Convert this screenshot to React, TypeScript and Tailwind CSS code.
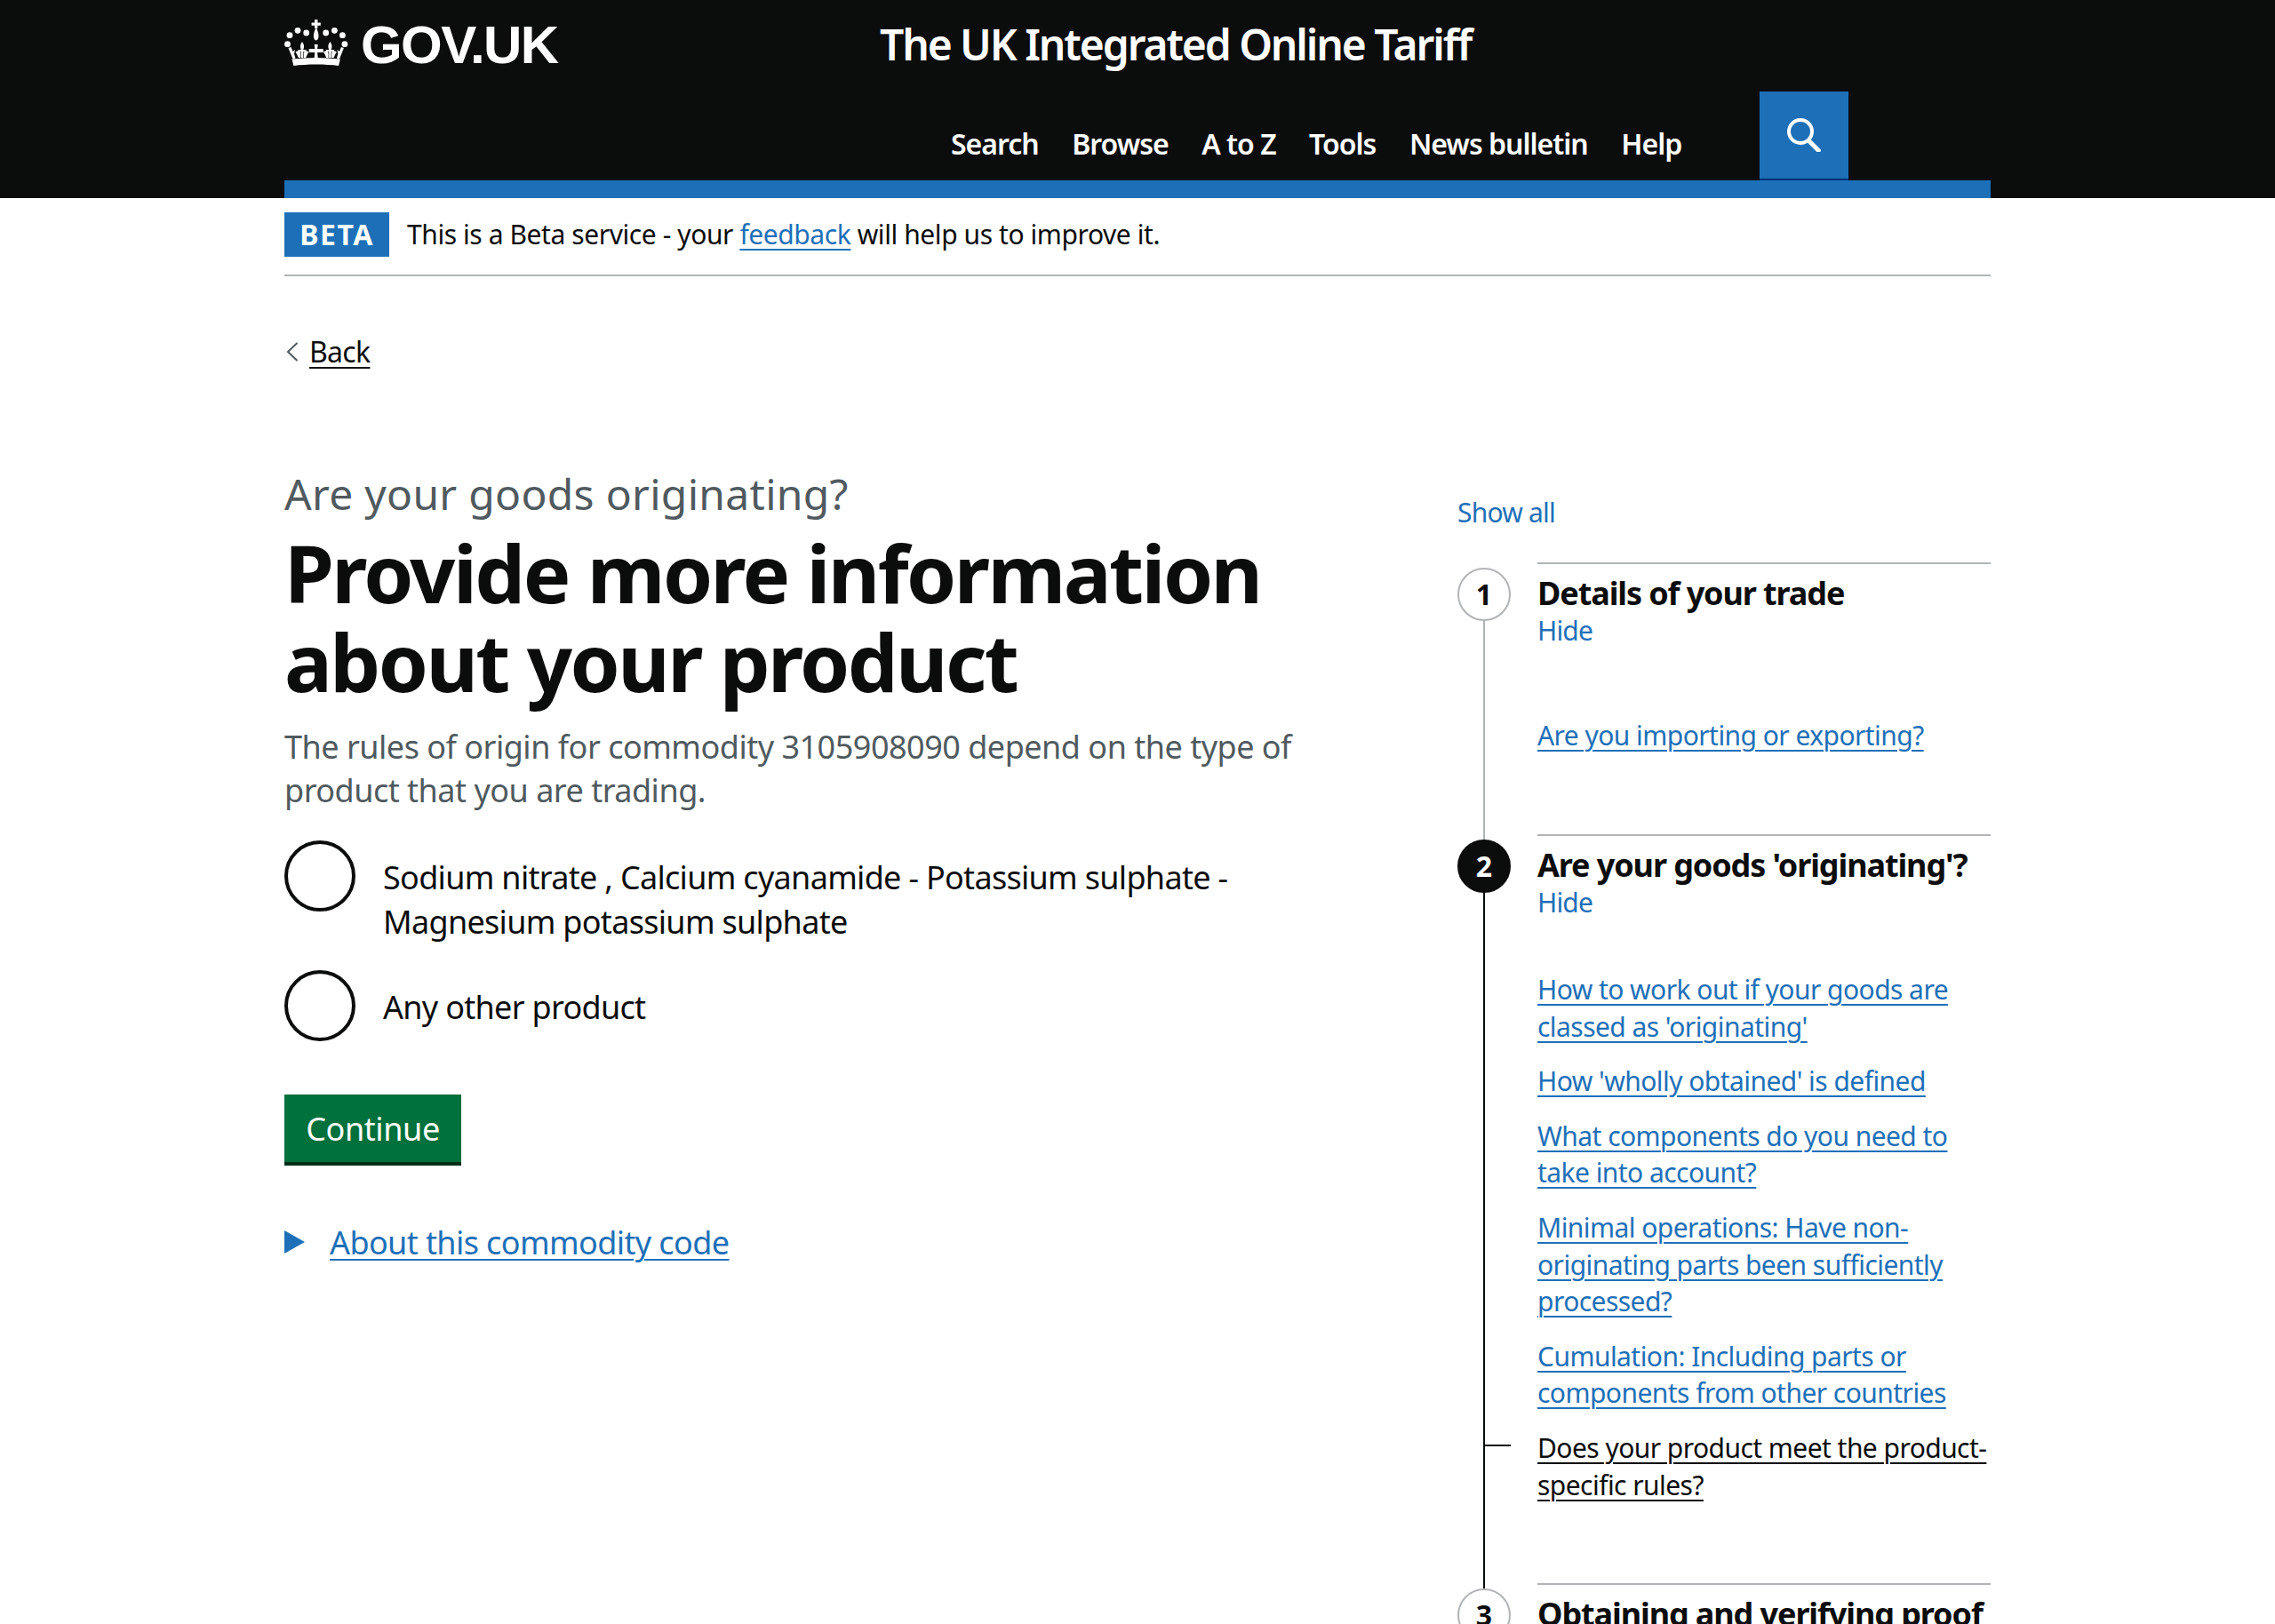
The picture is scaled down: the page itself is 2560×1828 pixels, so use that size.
import { Fragment } from "react";

const navItems = ["Search", "Browse", "A to Z", "Tools", "News bulletin", "Help"];

const originLinks = [
  ["How to work out if your goods are", "classed as 'originating'"],
  ["How 'wholly obtained' is defined"],
  ["What components do you need to", "take into account?"],
  ["Minimal operations: Have non-", "originating parts been sufficiently", "processed?"],
  ["Cumulation: Including parts or", "components from other countries"],
];

function Fleur({ x }: { x: number }) {
  return (
    <g transform={`translate(${x} 34)`}>
      <path d="M0-9C2.500-6 2.500-3 1.200 0V9H-1.200V0C-2.500-3-2.500-6 0-9z" />
      <path d="M-4.500 0h9v2.200h-9z" />
      <path d="M1.800 3.500C3 1 6 1 7.500 2.800 6 4 5.500 6.500 4.200 9H1.800z" />
      <path d="M-1.800 3.500C-3 1-6 1-7.500 2.800-6 4-5.500 6.500-4.200 9H-1.800z" />
    </g>
  );
}

function Crown() {
  return (
    <svg viewBox="0 0 72 52" className="w-[72px] h-[52px] fill-white" aria-hidden="true">
      <path d="M34 0h3.400v3.400h3.400v3.400h-3.400v3h-3.400v-3h-3.400V3.400H34z" />
      <path d="M35.700 9c2 3.500 2.800 7 2.800 9.500 0 2.800-1.200 5-2.800 5s-2.800-2.200-2.800-5c0-2.500.8-6 2.800-9.500z" />
      {[[3.500, 27.700], [6, 17.700], [15, 12.300], [24.700, 15], [46.700, 15], [56.400, 12.300], [65.400, 17.700], [67.900, 27.700]].map(([cx, cy]) => (
        <circle key={cx} cx={cx} cy={cy} r="3.400" />
      ))}
      <path d="M4.500 32l3-1 2 5 2.500-2-1 4.500 1.500 5-3 1z" />
      <path d="M66.900 32l-3-1-2 5-2.500-2 1 4.500-1.500 5 3 1z" />
      <Fleur x={20} />
      <Fleur x={51.400} />
      <path d="M33.700 28h4l-.6 5h6.600v4h-6.600l.6 6h-4l.6-6h-6.600v-4h6.600z" />
      <path d="M8.500 44.500c18-2 36-2 54.400 0l-1.900 7.500c-15-2-35-2-50.600 0z" />
    </svg>
  );
}

function Step({ num, title, current, children, className }: { num: number; title: string; current?: boolean; children?: React.ReactNode; className: string }) {
  return (
    <div className={`relative pl-[90px] ${className}`}>
      {/* rail and number sit over the step */}
      <div className={`absolute left-[29px] top-[6px] bottom-[-6px] w-[2px] ${current ? "bg-[#0b0c0c]" : "bg-[#b1b4b6]"}`} />
      <div className={`absolute left-0 top-[6px] w-[60px] h-[60px] rounded-full border-2 flex items-center justify-center text-[32px] font-bold ${current ? "bg-[#0b0c0c] border-[#0b0c0c] text-white" : "bg-white border-[#b1b4b6] text-[#0b0c0c]"}`}>
        {num}
      </div>
      <div className="border-t-2 border-[#b1b4b6] pt-[10px]">
        <h2 className="text-[36px] leading-[46px] font-bold tracking-[-1.1px] text-[#0b0c0c] whitespace-nowrap">{title}</h2>
        <div className="text-[30px] leading-[38px] tracking-[-0.8px] text-[#1d70b8]">Hide</div>
        {children}
      </div>
    </div>
  );
}

function StepLink({ lines, active }: { lines: string[]; active?: boolean }) {
  return (
    <div className="relative text-[30px] leading-[41.6px] tracking-[-0.55px] whitespace-nowrap">
      {active && <div className="absolute left-[-60px] top-[17px] w-[30px] h-[2px] bg-[#0b0c0c]" />}
      <a className={`underline underline-offset-[5px] decoration-2 ${active ? "text-[#0b0c0c]" : "text-[#1d70b8]"}`}>
        {lines.map((line, i) => (
          <Fragment key={line}>
            {i > 0 && <br />}
            {line}
          </Fragment>
        ))}
      </a>
    </div>
  );
}

export default function App() {
  return (
    <div className="h-[1828px] overflow-hidden bg-white font-['Noto_Sans',sans-serif] text-[#0b0c0c]">
      <header className="bg-[#0b0c0c] h-[223px]">
        <div className="w-[1920px] mx-auto h-full flex flex-col">
          <div className="h-[103px] flex items-start">
            <div className="w-[670px] flex items-start gap-[14px] pt-[22px]">
              <Crown />
              <span className="pt-[3px] font-['Liberation_Sans',sans-serif] font-bold text-[60px] leading-[52px] tracking-[-1.6px] text-white">GOV.UK</span>
            </div>
            <span className="pt-[24px] text-[48px] leading-[52px] font-semibold tracking-[-2.1px] text-white whitespace-nowrap">The UK Integrated Online Tariff</span>
          </div>
          <div className="h-[100px] flex">
            <nav className="ml-[750px] w-[910px] flex gap-[37.5px] pt-[37px]">
              {navItems.map((item) => (
                <a key={item} className="text-[32px] leading-[44px] font-semibold tracking-[-1px] text-white whitespace-nowrap">{item}</a>
              ))}
            </nav>
            <button className="w-[100px] h-[100px] bg-[#1d70b8] border-b-2 border-[#003078] flex items-center justify-center">
              <svg viewBox="0 0 38 38" className="w-[38px] h-[38px] fill-none stroke-white" aria-hidden="true">
                <circle cx="15" cy="15" r="13" strokeWidth="4" />
                <path d="M23 24L37 38" strokeWidth="5" />
              </svg>
            </button>
          </div>
          <div className="h-[20px] bg-[#1d70b8]" />
        </div>
      </header>

      <div className="w-[1920px] mx-auto">
        <div className="h-[88px] pt-[16px] border-b-2 border-[#b1b4b6] flex items-start gap-[20px]">
          <strong className="w-[118px] h-[50px] bg-[#1d70b8] text-white text-[32px] leading-[50px] font-bold text-center tracking-[1.5px]">BETA</strong>
          <p className="text-[30px] leading-[50px] tracking-[-0.42px] whitespace-nowrap">
            This is a Beta service - your <a className="text-[#1d70b8] underline underline-offset-[5px] decoration-2">feedback</a> will help us to improve it.
          </p>
        </div>

        <a className="mt-[64px] flex items-center h-[42px] text-[32px] tracking-[-0.7px]">
          <svg viewBox="0 0 14 22" className="w-[14px] h-[22px] ml-[2px] mr-[12px] fill-none stroke-[#505a5f]" aria-hidden="true">
            <path d="M12.500 1L2 11l10.500 10" strokeWidth="2" />
          </svg>
          <span className="underline underline-offset-[5px] decoration-2">Back</span>
        </a>

        <div className="flex mt-[110px]">
          <main className="w-[1320px]">
            <p className="pt-[1px] text-[48px] leading-[56px] tracking-[0.3px] text-[#505a5f]">Are your goods originating?</p>
            <h1 className="mt-[10px] text-[90px] leading-[100px] font-bold tracking-[-2.55px]">
              Provide more information<br />about your product
            </h1>
            <p className="mt-[22px] text-[36px] leading-[49px] tracking-[-0.5px] text-[#505a5f]">
              The rules of origin for commodity 3105908090 depend on the type of<br />product that you are trading.
            </p>

            <div className="mt-[32px] flex gap-[31px]">
              <span className="w-[80px] h-[80px] shrink-0 rounded-full border-4 border-[#0b0c0c]" />
              <label className="pt-[17px] text-[36px] leading-[50px] tracking-[-0.7px]">
                Sodium nitrate , Calcium cyanamide - Potassium sulphate -<br />Magnesium potassium sulphate
              </label>
            </div>
            <div className="mt-[29px] flex gap-[31px]">
              <span className="w-[80px] h-[80px] shrink-0 rounded-full border-4 border-[#0b0c0c]" />
              <label className="pt-[17px] text-[36px] leading-[50px] tracking-[-0.7px]">Any other product</label>
            </div>

            <button className="mt-[60px] block w-[199px] h-[80px] pt-[2px] bg-[#00703c] border-b-4 border-[#002d18] text-white text-[36px] tracking-[-0.4px]">Continue</button>

            <div className="mt-[60px] flex items-center gap-[28px]">
              <svg viewBox="0 0 23 26" className="w-[23px] h-[26px] fill-[#1d70b8]" aria-hidden="true">
                <path d="M0 0l23 13L0 26z" />
              </svg>
              <a className="pt-[2px] text-[36px] leading-[50px] tracking-[-0.6px] text-[#1d70b8] underline underline-offset-[5px] decoration-2">About this commodity code</a>
            </div>
          </main>

          <aside className="w-[600px]">
            <div className="mt-[29px] h-[42px] text-[30px] leading-[42px] tracking-[-0.8px] text-[#1d70b8]">Show all</div>
            <div className="mt-[35px]">
              <Step num={1} title="Details of your trade" className="h-[306px]">
                <div className="mt-[78px]">
                  <StepLink lines={["Are you importing or exporting?"]} />
                </div>
              </Step>
              <Step num={2} title="Are your goods 'originating'?" current className="h-[843px]">
                <div className="mt-[58px] flex flex-col gap-[20px]">
                  {originLinks.map((lines) => (
                    <StepLink key={lines[0]} lines={lines} />
                  ))}
                  <StepLink active lines={["Does your product meet the product-", "specific rules?"]} />
                </div>
              </Step>
              <Step num={3} title="Obtaining and verifying proof" className="h-[300px]" />
            </div>
          </aside>
        </div>
      </div>
    </div>
  );
}
